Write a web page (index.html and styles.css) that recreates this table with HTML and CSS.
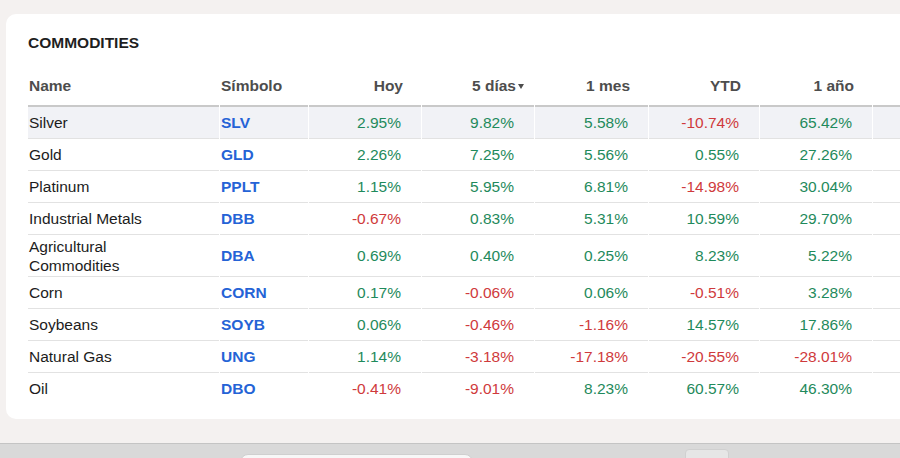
FILE: index.html
```html
<!DOCTYPE html>
<html lang="es">
<head>
<meta charset="utf-8">
<title>Commodities</title>
<link rel="stylesheet" href="styles.css">
</head>
<body>
<main class="page">
  <section class="card">
    <h2 class="card-title">COMMODITIES</h2>
    <table class="quotes">
      <thead>
        <tr>
          <th class="c-name">Name</th>
          <th class="c-sym">Símbolo</th>
          <th class="c-num">Hoy</th>
          <th class="c-num c-w2"><span class="sorted">5 días</span></th>
          <th class="c-num c-w3">1 mes</th>
          <th class="c-num c-w4">YTD</th>
          <th class="c-num">1 año</th>
          <th class="c-extra"></th>
        </tr>
      </thead>
      <tbody>
        <tr class="hover">
          <td class="c-name">Silver</td><td class="c-sym">SLV</td>
          <td class="up">2.95%</td><td class="up">9.82%</td><td class="up">5.58%</td><td class="down">-10.74%</td><td class="up">65.42%</td><td></td>
        </tr>
        <tr>
          <td class="c-name">Gold</td><td class="c-sym">GLD</td>
          <td class="up">2.26%</td><td class="up">7.25%</td><td class="up">5.56%</td><td class="up">0.55%</td><td class="up">27.26%</td><td></td>
        </tr>
        <tr>
          <td class="c-name">Platinum</td><td class="c-sym">PPLT</td>
          <td class="up">1.15%</td><td class="up">5.95%</td><td class="up">6.81%</td><td class="down">-14.98%</td><td class="up">30.04%</td><td></td>
        </tr>
        <tr>
          <td class="c-name">Industrial Metals</td><td class="c-sym">DBB</td>
          <td class="down">-0.67%</td><td class="up">0.83%</td><td class="up">5.31%</td><td class="up">10.59%</td><td class="up">29.70%</td><td></td>
        </tr>
        <tr class="tall">
          <td class="c-name">Agricultural Commodities</td><td class="c-sym">DBA</td>
          <td class="up">0.69%</td><td class="up">0.40%</td><td class="up">0.25%</td><td class="up">8.23%</td><td class="up">5.22%</td><td></td>
        </tr>
        <tr>
          <td class="c-name">Corn</td><td class="c-sym">CORN</td>
          <td class="up">0.17%</td><td class="down">-0.06%</td><td class="up">0.06%</td><td class="down">-0.51%</td><td class="up">3.28%</td><td></td>
        </tr>
        <tr>
          <td class="c-name">Soybeans</td><td class="c-sym">SOYB</td>
          <td class="up">0.06%</td><td class="down">-0.46%</td><td class="down">-1.16%</td><td class="up">14.57%</td><td class="up">17.86%</td><td></td>
        </tr>
        <tr>
          <td class="c-name">Natural Gas</td><td class="c-sym">UNG</td>
          <td class="up">1.14%</td><td class="down">-3.18%</td><td class="down">-17.18%</td><td class="down">-20.55%</td><td class="down">-28.01%</td><td></td>
        </tr>
        <tr>
          <td class="c-name">Oil</td><td class="c-sym">DBO</td>
          <td class="down">-0.41%</td><td class="down">-9.01%</td><td class="up">8.23%</td><td class="up">60.57%</td><td class="up">46.30%</td><td></td>
        </tr>
      </tbody>
    </table>
  </section>
  <section class="card card-next"></section>
</main>
<div class="bottom-bar">
  <div class="bar-field"></div>
  <div class="bar-button"></div>
</div>
</body>
</html>
```

FILE: styles.css
```css
* { box-sizing: border-box; }

html, body {
  margin: 0;
  padding: 0;
  height: 458px;
  overflow: hidden;
  background: #f4f1f0;
  font-family: "Liberation Sans", Arial, sans-serif;
}

.page {
  padding: 14px 0 0 6px;
  display: flex;
  flex-direction: column;
  gap: 24px;
}

.card {
  width: 1000px;
  background: #ffffff;
  border-radius: 10px;
  padding: 20px 0 14px 21px;
}

.card-next {
  margin-left: 4px;
  height: 40px;
}

.card-title {
  margin: 0 0 14px 1px;
  font-size: 15.5px;
  line-height: 18px;
  font-weight: 700;
  color: #1f1f1f;
}

.quotes {
  border-collapse: separate;
  border-spacing: 1px 0;
  table-layout: fixed;
  width: 947px;
  font-size: 15.5px;
  color: #222222;
}

.quotes th {
  height: 41px;
  vertical-align: bottom;
  padding: 0 18px 10px 0;
  border-bottom: 2px solid #c9c9c9;
  font-weight: 700;
  color: #4d4d4d;
  text-align: right;
  line-height: 18px;
  width: 112px;
}

.quotes th.c-name { width: 191px; text-align: left; padding-left: 1px; }
.quotes th.c-sym { width: 88px; text-align: left; padding-left: 1px; }
.quotes th.c-w3 { width: 113px; }
.quotes th.c-w4 { width: 110px; }
.quotes th.c-extra { width: 100px; }

.sorted { position: relative; }
.sorted::after {
  content: "";
  position: absolute;
  right: -8px;
  top: 7px;
  border-left: 3px solid transparent;
  border-right: 3px solid transparent;
  border-top: 5px solid #4d4d4d;
}

.quotes td {
  height: 32px;
  padding: 0 20px 0 0;
  line-height: 19.5px;
  vertical-align: middle;
  text-align: right;
  border-bottom: 1px solid #e2e2e2;
}

.quotes tr.tall td { line-height: 19px; padding-top: 1px; padding-bottom: 1px; }
.quotes tr.tall td.c-name { padding-top: 2px; padding-bottom: 1px; }

.quotes tbody tr:last-child td { border-bottom: none; }

.quotes td.c-name {
  text-align: left;
  padding-right: 40px;
  padding-left: 1px;
  color: #1c1c1c;
}

.quotes td.c-sym {
  text-align: left;
  padding-left: 1px;
  font-weight: 700;
  color: #2563d6;
}

.quotes tr.hover td { background: #f1f2f6; }

.up { color: #1f8a5c; }
.down { color: #cf3a3c; }

.bottom-bar {
  position: fixed;
  left: 0;
  right: 0;
  bottom: 0;
  height: 15px;
  background: #d9d9d9;
  border-top: 1px solid #c4c4c4;
}

.bar-field {
  position: absolute;
  left: 240px;
  top: 10px;
  width: 233px;
  height: 20px;
  background: #f7f7f7;
  border-radius: 8px;
  border: 1px solid #cfcfcf;
}

.bar-button {
  position: absolute;
  left: 685px;
  top: 5px;
  width: 44px;
  height: 20px;
  background: #e6e6e6;
  border-radius: 4px;
  border: 1px solid #d0d0d0;
}
```
